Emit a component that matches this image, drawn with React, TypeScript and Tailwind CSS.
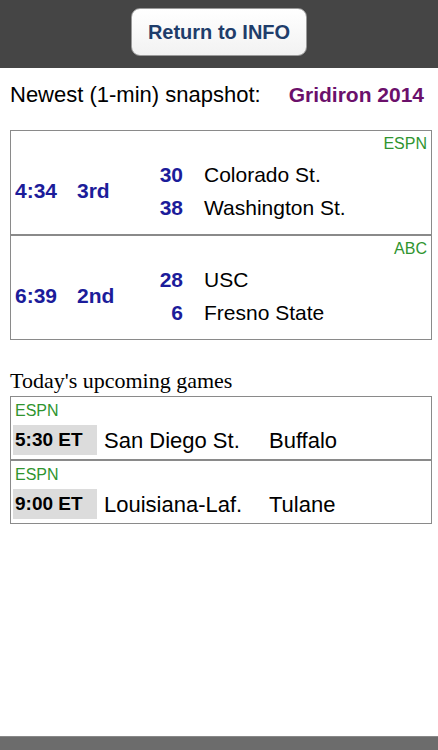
import React from 'react';

type Live = { clock: string; period: string; channel: string; teams: [number, string][] };
type Upcoming = { channel: string; time: string; away: string; home: string };

const live: Live[] = [
  { clock: '4:34', period: '3rd', channel: 'ESPN', teams: [[30, 'Colorado St.'], [38, 'Washington St.']] },
  { clock: '6:39', period: '2nd', channel: 'ABC', teams: [[28, 'USC'], [6, 'Fresno State']] },
];

const upcoming: Upcoming[] = [
  { channel: 'ESPN', time: '5:30 ET', away: 'San Diego St.', home: 'Buffalo' },
  { channel: 'ESPN', time: '9:00 ET', away: 'Louisiana-Laf.', home: 'Tulane' },
];

const sans = { fontFamily: '"Liberation Sans", Arial, sans-serif' };

export default function App() {
  return (
    <div className="flex h-[750px] w-[438px] flex-col bg-white text-black" style={sans}>
      {/* Top bar */}
      <div className="flex h-[68px] justify-center bg-[#454545] pt-[8px]">
        <button className="h-[48px] w-[176px] rounded-[9px] border border-[#9a9a9a] bg-gradient-to-b from-white to-[#f2f2f2] text-[20px] font-bold text-[#1f3d6b]">
          Return to INFO
        </button>
      </div>

      {/* Snapshot heading */}
      <div className="flex items-center px-[10px] pt-[14px] text-[22px] leading-[26px]">
        <span>Newest (1-min) snapshot:</span>
        <span className="ml-[28px] text-[21px] font-bold text-[#6b106b]">Gridiron 2014</span>
      </div>

      {/* Live games */}
      <div className="ml-[10px] mr-[6px] mt-[22px] border border-[#8a8a8a]">
        {live.map((g, i) => (
          <div key={i} className={`px-[4px] pb-[10px] pt-[3px] ${i > 0 ? 'border-t-2 border-[#8a8a8a]' : ''}`}>
            <div className="text-right text-[16px] leading-[20px] text-[#2f942f]">{g.channel}</div>
            <div className="mt-[4px] flex items-center">
              <div className="flex text-[21px] font-bold text-[#1c1c9a]">
                <span className="w-[62px]">{g.clock}</span>
                <span className="w-[78px]">{g.period}</span>
              </div>
              <div className="flex flex-col">
                {g.teams.map(([score, name]) => (
                  <div key={name} className="flex h-[33px] items-center text-[21px]">
                    <span className="w-[28px] text-right font-bold text-[#1c1c9a]">{score}</span>
                    <span className="ml-[21px]">{name}</span>
                  </div>
                ))}
              </div>
            </div>
          </div>
        ))}
      </div>

      {/* Upcoming */}
      <div
        className="mt-[28px] px-[10px] text-[22px] leading-[26px]"
        style={{ fontFamily: '"Liberation Serif", "Times New Roman", serif' }}
      >
        Today's upcoming games
      </div>
      <div className="ml-[10px] mr-[6px] mt-[2px] border border-[#8a8a8a]">
        {upcoming.map((g, i) => (
          <div key={i} className={`px-[2px] pb-[4px] pt-[3px] ${i > 0 ? 'border-t-2 border-[#8a8a8a]' : ''}`}>
            <div className="pl-[2px] text-[16px] leading-[22px] text-[#2f942f]">{g.channel}</div>
            <div className="mt-[3px] flex h-[30px] items-center text-[22px]">
              <span className="flex h-full w-[84px] items-center bg-[#dcdcdc] pl-[2px] text-[19px] font-bold">{g.time}</span>
              <span className="ml-[7px] w-[165px]">{g.away}</span>
              <span>{g.home}</span>
            </div>
          </div>
        ))}
      </div>

      <div className="flex-1" />
      <div className="h-[14px] border-t border-[#888] bg-[#6c6c6c]" />
    </div>
  );
}
